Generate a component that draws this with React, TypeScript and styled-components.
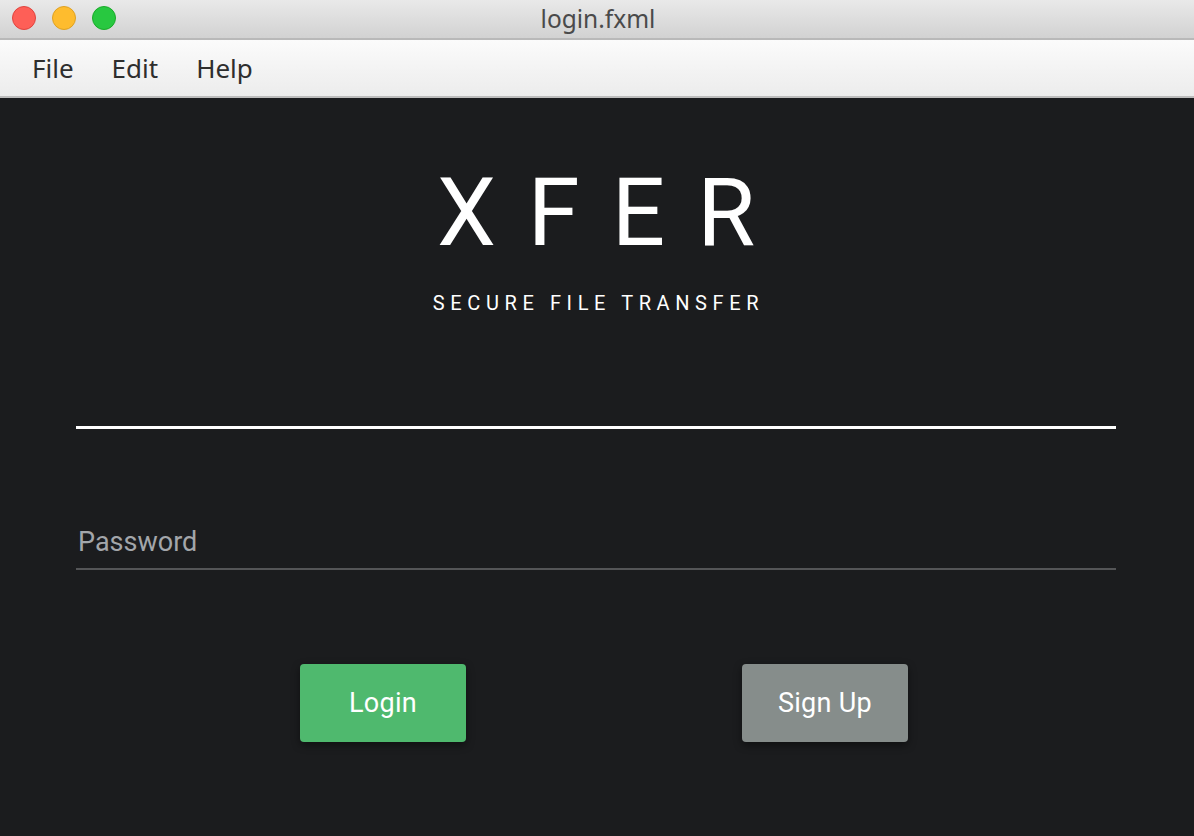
import styled, { createGlobalStyle } from 'styled-components';

const GlobalStyle = createGlobalStyle`
  html, body {
    margin: 0;
    padding: 0;
    height: 100%;
    background: #1b1c1e;
  }
  #root {
    height: 100%;
  }
`;

const MENU_ITEMS = ['File', 'Edit', 'Help'];
const LIGHTS = [
  { fill: '#fe5f57', border: '#e0443e' },
  { fill: '#febc2e', border: '#dea123' },
  { fill: '#28c840', border: '#1aab29' },
];

const Window = styled.div`
  display: flex;
  flex-direction: column;
  width: 1194px;
  height: 836px;
  overflow: hidden;
  font-family: Roboto, 'Liberation Sans', sans-serif;
`;

const TitleBar = styled.div`
  position: relative;
  height: 38px;
  flex-shrink: 0;
  background: linear-gradient(#e9e9e9, #d2d2d2);
  border-bottom: 2px solid #b9b9b9;
  display: flex;
  align-items: center;
  justify-content: center;
`;

const Lights = styled.div`
  position: absolute;
  left: 12px;
  top: 6px;
  display: flex;
  gap: 16px;
`;

const Light = styled.span<{ $fill: string; $border: string }>`
  width: 22px;
  height: 22px;
  border-radius: 50%;
  background: ${({ $fill }) => $fill};
  border: 1px solid ${({ $border }) => $border};
`;

const Title = styled.div`
  font-family: 'Noto Sans', 'Liberation Sans', sans-serif;
  font-size: 24.5px;
  color: #4a4a4a;
  margin-top: -2px;
  padding-left: 2px;
`;

const MenuBar = styled.div`
  height: 56px;
  flex-shrink: 0;
  background: linear-gradient(#fbfbfb, #ececec);
  border-bottom: 2px solid #bdbdbd;
  display: flex;
  align-items: center;
  padding-left: 32px;
  gap: 38px;
`;

const MenuItem = styled.span`
  font-family: 'Noto Sans', 'Liberation Sans', sans-serif;
  font-size: 26px;
  color: #2e2e2e;
`;

const Content = styled.main`
  flex: 1;
  background: #1b1c1e;
  display: flex;
  flex-direction: column;
  padding: 0 78px 0 76px;
`;

const Brand = styled.h1`
  margin: 68px 0 0;
  text-align: center;
  font-weight: 400;
  font-size: 94px;
  line-height: 1;
  letter-spacing: 32px;
  padding-left: 32px;
  color: #ffffff;
`;

const Tagline = styled.div`
  margin-top: 31px;
  text-align: center;
  font-size: 20px;
  font-weight: 400;
  letter-spacing: 5.6px;
  padding-left: 5px;
  color: #ffffff;
`;

const Field = styled.div<{ $active?: boolean }>`
  border-bottom: ${({ $active }) => ($active ? '3px solid #ffffff' : '2px solid #545557')};
  height: ${({ $active }) => ($active ? '40px' : '49px')};
  display: flex;
  align-items: flex-end;
  padding-bottom: 12px;
  box-sizing: border-box;
`;

const Placeholder = styled.span`
  font-size: 27px;
  line-height: 1;
  color: #a3a6aa;
  padding-left: 2px;
`;

const Spacer = styled.div<{ $h: number }>`
  height: ${({ $h }) => $h}px;
  flex-shrink: 0;
`;

const Buttons = styled.div`
  display: flex;
  justify-content: center;
  gap: 276px;
  margin-top: 94px;
  padding-left: 16px;
`;

const Button = styled.button<{ $variant: 'primary' | 'secondary' }>`
  width: 166px;
  height: 78px;
  border: none;
  border-radius: 4px;
  background: ${({ $variant }) => ($variant === 'primary' ? '#4fb96e' : '#868d8b')};
  color: #ffffff;
  font-family: Roboto, 'Liberation Sans', sans-serif;
  font-size: 27px;
  letter-spacing: 0.3px;
  box-shadow: 0 3px 8px rgba(0, 0, 0, 0.45);
  cursor: pointer;
`;

const App = () => {
  return (
    <>
      <GlobalStyle />
      <Window>
        <TitleBar>
          <Lights>
            {LIGHTS.map((l, i) => (
              <Light key={i} $fill={l.fill} $border={l.border} />
            ))}
          </Lights>
          <Title>login.fxml</Title>
        </TitleBar>
        <MenuBar>
          {MENU_ITEMS.map((item) => (
            <MenuItem key={item}>{item}</MenuItem>
          ))}
        </MenuBar>
        <Content>
          <Brand>XFER</Brand>
          <Tagline>SECURE FILE TRANSFER</Tagline>
          <Spacer $h={74} />
          <Field $active />
          <Spacer $h={92} />
          <Field>
            <Placeholder>Password</Placeholder>
          </Field>
          <Buttons>
            <Button $variant="primary">Login</Button>
            <Button $variant="secondary">Sign Up</Button>
          </Buttons>
        </Content>
      </Window>
    </>
  );
};

export default App;
